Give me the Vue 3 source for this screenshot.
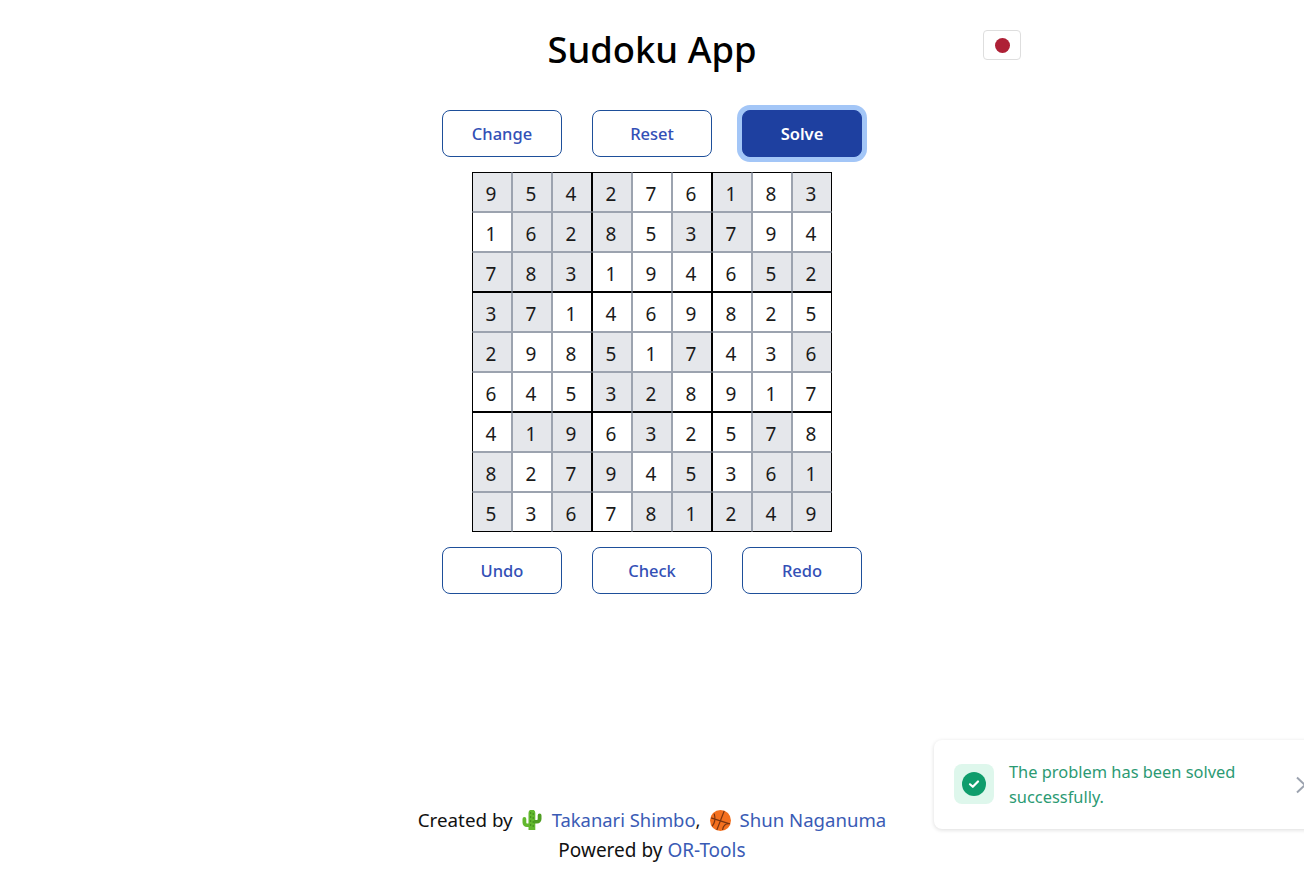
<script setup>
const rows = [
  '954276183', '162853794', '783194652',
  '371469825', '298517436', '645328917',
  '419632578', '827945361', '536781249',
]
// 1 = shaded cell
const shaded = [
  '111100101', '011101100', '111000011',
  '110000000', '100101001', '000110000',
  '011010010', '101101011', '101011111',
]

function cellClass(r, c) {
  return {
    shaded: shaded[r][c] === '1',
    'edge-top': r % 3 === 0,
    'edge-left': c % 3 === 0,
    'edge-bottom': r % 3 === 2,
    'edge-right': c % 3 === 2,
  }
}
</script>

<template>
  <div class="page">
    <header class="title-row">
      <h1>Sudoku App</h1>
      <button class="flag" aria-label="日本語">
        <span class="flag-dot"></span>
      </button>
    </header>

    <div class="btn-row top">
      <button class="btn">Change</button>
      <button class="btn">Reset</button>
      <button class="btn primary">Solve</button>
    </div>

    <div class="board">
      <template v-for="(row, r) in rows" :key="r">
        <div v-for="(n, c) in row" :key="c" class="cell" :class="cellClass(r, c)">{{ n }}</div>
      </template>
    </div>

    <div class="btn-row bottom">
      <button class="btn">Undo</button>
      <button class="btn">Check</button>
      <button class="btn">Redo</button>
    </div>

    <footer class="footer">
      <div class="credit">
        <span class="created">Created by</span>
        <svg class="emoji cactus" viewBox="0 0 20 20">
          <path fill="#62b82e" d="M6.500 20V3a3.400 3.400 0 0 1 6.800 0v17z" />
          <path fill="#62b82e" d="M.5 9a1.900 1.900 0 0 1 3.800 0v3.500c0 .6.400 1 1 1H8v3.500H5c-2.600 0-4.500-1.900-4.500-4.500z" />
          <path fill="#4f9e22" d="M19.500 5.500a1.900 1.900 0 0 0-3.800 0V9c0 .6-.4 1-1 1H12v3.500h3c2.600 0 4.500-1.900 4.500-4.500z" />
          <path fill="none" stroke="#3f8a1c" stroke-width="1" stroke-dasharray="2 2" d="M8.700 2v16M11.200 3v15" />
        </svg>
        <a class="takanari">Takanari Shimbo</a><span>,</span>
        <svg class="emoji ball" viewBox="0 0 20 20">
          <circle cx="10" cy="10" r="10" fill="#f4701f" />
          <path fill="none" stroke="#7a3410" stroke-width="1.100" d="M1 7.500l17 5.500M13.500 1l-7 18M2 15.500c3-3.500 3.500-7 2-12M12 19c.5-4 3-6.500 7-6" />
        </svg>
        <a>Shun Naganuma</a>
      </div>
      <div class="credit powered">Powered by <a>OR-Tools</a></div>
    </footer>

    <div class="toast">
      <div class="toast-icon">
        <svg viewBox="0 0 24 24" width="24" height="24">
          <circle cx="12" cy="12" r="12" fill="#0f9d6c" />
          <path fill="none" stroke="#fff" stroke-width="2.200" stroke-linecap="round" stroke-linejoin="round" d="M8 12.300l2.800 2.500 5.200-5.300" />
        </svg>
      </div>
      <p class="toast-text">The problem has been solved successfully.</p>
      <svg class="toast-close" viewBox="0 0 12 18" width="12" height="18">
        <path fill="none" stroke="#9ca3af" stroke-width="2" d="M1 1.500l8 7.500-8 7.500" />
      </svg>
    </div>
  </div>
</template>

<style scoped>
.page {
  position: relative;
  height: 869px;
  overflow: hidden;
  display: flex;
  flex-direction: column;
  align-items: center;
  font-family: "Noto Sans", "Open Sans", sans-serif;
  color: #000;
  background: #fff;
}
.title-row {
  position: relative;
  width: 100%;
  height: 110px;
  text-align: center;
}
h1 {
  margin: 0;
  padding-top: 24px;
  font-size: 36.400px;
  line-height: 50px;
  font-weight: 500;
}
.flag {
  position: absolute;
  left: 983px;
  top: 30px;
  width: 38px;
  height: 30px;
  padding: 0;
  display: flex;
  align-items: center;
  justify-content: center;
  background: #fff;
  border: 1px solid #dedede;
  border-radius: 4px;
}
.flag-dot {
  width: 15px;
  height: 15px;
  border-radius: 50%;
  background: #ae2036;
}
.btn-row {
  display: flex;
  gap: 30px;
}
.btn-row.top { margin-bottom: 15px; }
.btn-row.bottom { margin-top: 15px; }
.btn {
  width: 120px;
  height: 47px;
  padding: 0;
  background: #fff;
  border: 1px solid #1e4f9a;
  border-radius: 8px;
  color: #3350b6;
  font-family: inherit;
  font-size: 16.500px;
  font-weight: 500;
}
.btn.primary {
  background: #1e40a0;
  border-color: #1e40a0;
  color: #fff;
  font-weight: 600;
  box-shadow: 0 0 0 5px #a3c6f7;
}
.board {
  display: grid;
  grid-template-columns: repeat(9, 40px);
  grid-auto-rows: 40px;
}
.cell {
  box-sizing: border-box;
  display: flex;
  align-items: center;
  justify-content: center;
  padding: 3px 2px 0 0;
  background: #fff;
  border: 1px solid #9ca3af;
  font-size: 19px;
  font-weight: 400;
  color: #1a1a1a;
}
.cell.shaded { background: #e5e7eb; }
.cell.edge-top { border-top-color: #000; }
.cell.edge-left { border-left-color: #000; }
.cell.edge-bottom { border-bottom-color: #000; }
.cell.edge-right { border-right-color: #000; }
.footer {
  margin-top: auto;
  padding-bottom: 4px;
  text-align: center;
  font-size: 18.600px;
  line-height: 30px;
  color: #111;
}
.credit {
  display: flex;
  justify-content: center;
  align-items: center;
  white-space: pre;
}
.credit a { color: #3a5bb5; }
.created { font-size: 18.800px; }
.credit .takanari { font-size: 18.400px; }
.powered { font-size: 19px; }
.emoji { flex: none; }
.cactus {
  width: 20px;
  height: 20px;
  margin: 0 10px 0 9px;
}
.ball {
  width: 21px;
  height: 21px;
  margin: 0 9px;
}
.toast {
  position: absolute;
  left: 934px;
  top: 740px;
  box-sizing: border-box;
  width: 400px;
  height: 89px;
  display: flex;
  align-items: flex-start;
  padding: 19px 20px 0;
  background: #fff;
  border-radius: 8px;
  box-shadow: 0 1px 4px rgba(0, 0, 0, 0.14);
}
.toast-icon {
  flex: none;
  width: 40px;
  height: 40px;
  margin-top: 5px;
  display: flex;
  align-items: center;
  justify-content: center;
  border-radius: 8px;
  background: #def7ec;
}
.toast-text {
  width: 270px;
  margin: 0 0 0 15px;
  font-size: 16.400px;
  line-height: 25px;
  color: #2b9a73;
}
.toast-close {
  position: absolute;
  left: 362px;
  top: 36px;
}
</style>
